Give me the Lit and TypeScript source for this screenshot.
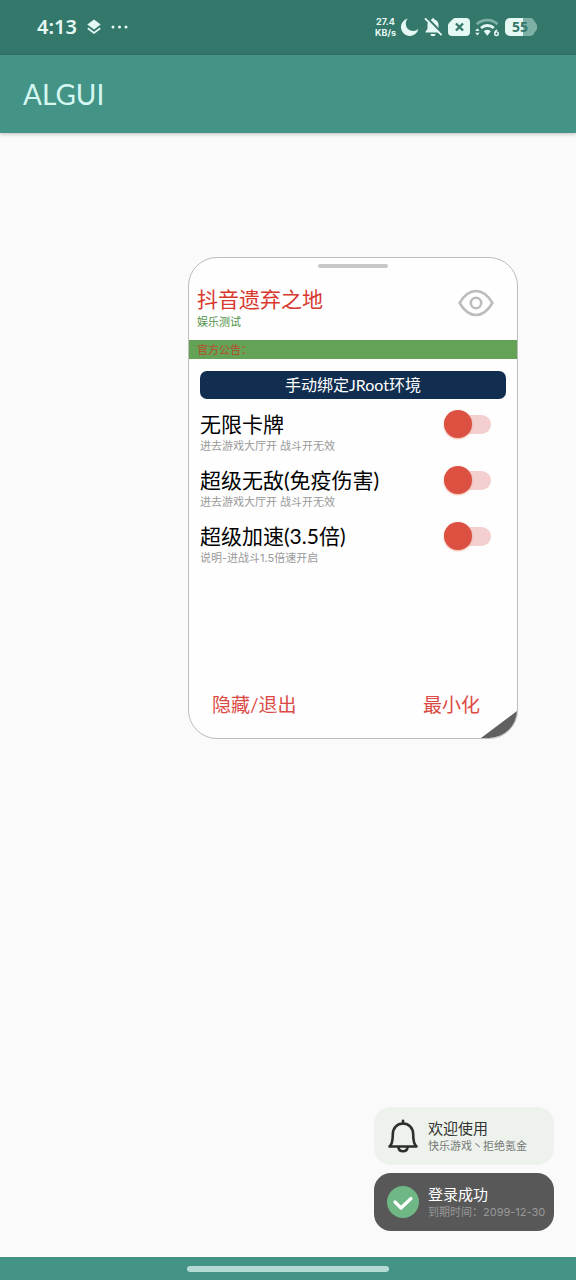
import { LitElement, html, css, svg } from "lit";
import { customElement, property } from "lit/decorators.js";

@customElement("status-bar")
class StatusBar extends LitElement {
  static styles = css`
    :host {
      display: flex;
      align-items: center;
      justify-content: space-between;
      height: 55px;
      box-sizing: border-box;
      padding: 0 38px 1px 37px;
      background: #34786b;
      color: #e6f8f4;
      font-family: "Noto Sans", sans-serif;
    }
    .side { display: flex; align-items: center; }
    .left { gap: 10px; }
    .right { gap: 5px; }
    .time { font-size: 20px; line-height: 24px; font-weight: 600; }
    .speed {
      display: flex;
      flex-direction: column;
      align-items: center;
      font: 700 9px/11px Inter, sans-serif;
    }
    svg { display: block; }
    .battery { font: 700 14px/18px "Open Sans", sans-serif; }
  `;

  render() {
    return html`
      <div class="side left">
        <span class="time">4:13</span>
        <svg width="14" height="16" viewBox="0 0 14 16" fill="currentColor" aria-hidden="true">
          <path d="M7 .5 13.700 5.500 7 10.500.3 5.500Z" />
          <path d="M.8 9.300 7 14 13.200 9.300" fill="none" stroke="currentColor" stroke-width="1.700" />
        </svg>
        <svg width="17" height="4" viewBox="0 0 17 4" fill="currentColor" aria-hidden="true">
          <circle cx="2" cy="2" r="1.500" /><circle cx="8.500" cy="2" r="1.500" /><circle cx="15" cy="2" r="1.500" />
        </svg>
      </div>
      <div class="side right">
        <div class="speed"><span>27.4</span><span>KB/s</span></div>
        <svg width="18" height="18" viewBox="0 0 18 18" fill="currentColor" aria-hidden="true">
          <path d="M6.800.6A7.200 7.200 0 0 0 17.400 10.800 8.800 8.800 0 1 1 6.800.6Z" />
        </svg>
        <svg width="19" height="20" viewBox="0 0 19 20" aria-hidden="true">
          <path d="M9 1.200c.9 0 1.400.6 1.400 1.400 2.700.7 4.100 2.800 4.100 5.400v4l1.900 2.600v.8H1.600v-.8L3.500 12V8c0-2.600 1.400-4.700 4.100-5.400 0-.8.5-1.400 1.400-1.400Z" fill="currentColor" />
          <path d="M6.400 17h5.200a2.600 2.200 0 0 1-5.200 0Z" fill="currentColor" />
          <path d="M2.600.4 19 17" stroke="#34786b" stroke-width="2.200" />
          <path d="M1 1.400 17.600 18.200" stroke="currentColor" stroke-width="1.900" />
        </svg>
        <svg width="22" height="18" viewBox="0 0 22 18" aria-hidden="true">
          <path d="M7.500 0H18a4 4 0 0 1 4 4v10a4 4 0 0 1-4 4H4a4 4 0 0 1-4-4V7.500C0 6.400.4 5.500 1.200 4.700L4.700 1.200C5.500.4 6.400 0 7.500 0Z" fill="currentColor" />
          <path d="m8 5.500 7 7m0-7-7 7" stroke="#34786b" stroke-width="2.400" />
        </svg>
        <svg width="25" height="19" viewBox="0 0 25 19" fill="none" aria-hidden="true">
          <path d="M1.800 6.200a15.500 15.500 0 0 1 20.800 0" stroke="#7fb0a6" stroke-width="2.800" />
          <path d="M6 10a9.500 9.500 0 0 1 12.800 0" stroke="currentColor" stroke-width="2.800" />
          <path d="M8.800 13.300a5.500 5.500 0 0 1 7 0l-3.500 4.400Z" fill="currentColor" />
          <path d="M.2 13 2.400 10.200 4.600 13ZM.2 14.800h4.400L2.400 17.600Z" fill="currentColor" />
          <path d="M22 11.800c-1.600 1-2.300 2.200-2.300 3.600" stroke="currentColor" stroke-width="1.400" />
          <circle cx="21.500" cy="15.700" r="1.800" stroke="currentColor" stroke-width="1.400" />
        </svg>
        <svg class="battery" width="33" height="18" viewBox="0 0 33 18" role="img" aria-label="55%">
          <path d="M18 0h7c2.500 0 4 1.300 4.500 3.800 1.800 1.200 2.700 3 2.700 5.200s-.9 4-2.700 5.200C29 16.700 27.500 18 25 18h-7Z" fill="#7fb0a6" />
          <path d="M5 0h13v18H5a5 5 0 0 1-5-5V5a5 5 0 0 1 5-5Z" fill="currentColor" />
          <text x="15" y="14" text-anchor="middle" fill="#34786b">55</text>
        </svg>
      </div>
    `;
  }
}

@customElement("switch-row")
class SwitchRow extends LitElement {
  @property() label = "";
  @property() note = "";

  static styles = css`
    :host {
      display: flex;
      justify-content: space-between;
      align-items: flex-start;
      height: 56px;
    }
    .text { display: flex; flex-direction: column; }
    .label { font-size: 21px; line-height: 28px; color: #000; }
    .note { font: 11px/17px Inter, "Noto Sans CJK SC", sans-serif; color: #999; }
    .switch {
      appearance: none;
      display: grid;
      align-items: center;
      width: 47px;
      height: 28px;
      margin: 0;
    }
    .switch::before,
    .switch::after { content: ""; grid-area: 1 / 1; }
    .switch::before {
      justify-self: end;
      width: 39px;
      height: 19px;
      border-radius: 10px;
      background: #f4cfcf;
    }
    .switch::after {
      width: 28px;
      height: 28px;
      border-radius: 50%;
      background: #dc5041;
      box-shadow: 0 1px 2px rgba(220, 80, 40, 0.45);
    }
    .switch:checked::after { justify-self: end; }
  `;

  render() {
    return html`
      <label class="text" for="toggle">
        <span class="label">${this.label}</span>
        <span class="note">${this.note}</span>
      </label>
      <input class="switch" id="toggle" type="checkbox" role="switch" />
    `;
  }
}

@customElement("toast-card")
class ToastCard extends LitElement {
  @property() kind = "info";
  @property() heading = "";
  @property() detail = "";

  static styles = css`
    .card {
      display: flex;
      align-items: center;
      gap: 8px;
      width: 180px;
      height: 58px;
      box-sizing: border-box;
      padding-left: 12px;
      border-radius: 17px;
      background: #edf3ec;
      color: #333;
      white-space: nowrap;
    }
    .success { background: #585858; color: #fff; }
    .heading { font-size: 15px; line-height: 20px; }
    .detail { font: 11px/17px Inter, "Noto Sans CJK SC", sans-serif; color: #777; }
    .success .detail { color: #999; }
    svg { display: block; }
  `;

  private bell = svg`
    <path d="M3.500 27.500C6.500 25 6.800 21 6.800 15.500 6.800 9 11 4.500 17 4.500s10.200 4.500 10.200 11c0 5.500.3 9.500 3.300 12Z" />
    <path d="M17 4.500V1.800" />
    <path d="M12.500 28.500c.7 5 8.300 5 9 0" />
  `;

  render() {
    return html`
      <div class="card ${this.kind}">
        ${this.kind === "success"
          ? html`<svg width="34" height="34" viewBox="0 0 34 34" fill="none" aria-hidden="true">
              <circle cx="17" cy="17" r="16" fill="#6fb785" />
              <path d="m9 17 6 6L25 13.500" stroke="#fff" stroke-width="3.200" stroke-linecap="round" stroke-linejoin="round" />
            </svg>`
          : html`<svg width="34" height="34" viewBox="0 0 34 34" fill="none" stroke="#2c2f2c" stroke-width="2.600" stroke-linecap="round" stroke-linejoin="round" aria-hidden="true">${this.bell}</svg>`}
        <div>
          <div class="heading">${this.heading}</div>
          <div class="detail">${this.detail}</div>
        </div>
      </div>
    `;
  }
}

@customElement("float-panel")
class FloatPanel extends LitElement {
  static styles = css`
    :host {
      display: flex;
      flex-direction: column;
      box-sizing: border-box;
      border: 1px solid #bdbdbd;
      border-radius: 29px;
      background: #fefefe;
      overflow: hidden;
    }
    .handle {
      align-self: center;
      width: 70px;
      height: 4px;
      margin-top: 6px;
      border-radius: 2px;
      background: #c8c8c8;
    }
    .head {
      display: flex;
      justify-content: space-between;
      align-items: flex-start;
      padding: 16px 23px 0 8px;
      height: 56px;
    }
    .title { margin: 0; font-size: 21px; font-weight: 400; line-height: 30px; color: #d8392f; }
    .subtitle { margin: 0; font-size: 11px; line-height: 16px; color: #4f9245; }
    .eye { margin: 5px 0 0; padding: 0; border: 0; background: none; }
    .eye svg { display: block; }
    .notice {
      padding-left: 8px;
      font-size: 11px;
      line-height: 19px;
      color: #b84a2c;
      background: #64a256;
    }
    .body { flex: 1; padding: 12px 11px 0; }
    .bind {
      display: block;
      width: 100%;
      height: 28px;
      padding: 0;
      border: 0;
      border-radius: 7px;
      background: #112e50;
      color: #fff;
      font: inherit;
      font-size: 16px;
      line-height: 28px;
    }
    .rows { padding: 11px 15px 0 0; }
    .foot {
      display: flex;
      justify-content: space-between;
      padding: 0 37px 19px 23px;
    }
    .action {
      padding: 0;
      border: 0;
      background: none;
      color: #dc4a45;
      font: inherit;
      font-size: 19px;
      line-height: 28px;
    }
    .grip { position: absolute; right: 0; bottom: 0; }
  `;

  render() {
    return html`
      <div class="handle"></div>
      <div class="head">
        <div>
          <h2 class="title">抖音遗弃之地</h2>
          <p class="subtitle">娱乐测试</p>
        </div>
        <button class="eye" aria-label="显示">
          <svg width="36" height="28" viewBox="0 0 36 28" fill="none" stroke="#bcbcbc" stroke-width="2.600" stroke-linejoin="round">
            <path d="M1.600 14C6 6.500 11.500 2 18 2s12 4.500 16.400 12C30 21.500 24.500 26 18 26S6 21.500 1.600 14Z" />
            <circle cx="18" cy="14" r="5.200" />
          </svg>
        </button>
      </div>
      <div class="notice">官方公告：</div>
      <div class="body">
        <button class="bind">手动绑定JRoot环境</button>
        <div class="rows">
          <switch-row label="无限卡牌" note="进去游戏大厅开 战斗开无效"></switch-row>
          <switch-row label="超级无敌(免疫伤害)" note="进去游戏大厅开 战斗开无效"></switch-row>
          <switch-row label="超级加速(3.5倍)" note="说明-进战斗1.5倍速开启"></switch-row>
        </div>
      </div>
      <div class="foot">
        <button class="action">隐藏/退出</button>
        <button class="action">最小化</button>
      </div>
      <svg class="grip" width="36" height="27" viewBox="0 0 36 27" aria-hidden="true">
        <path d="M36 0v27H0Z" fill="#606060" />
      </svg>
    `;
  }
}

@customElement("app-root")
class AppRoot extends LitElement {
  static styles = css`
    :host {
      display: flex;
      flex-direction: column;
      position: relative;
      min-height: 100vh;
      background: #fafafa;
      font-family: Lato, "Noto Sans CJK SC", sans-serif;
    }
    .appbar {
      display: flex;
      align-items: center;
      height: 78px;
      padding: 0 23px;
      background: #439487;
      box-shadow: 0 1px 4px rgba(0, 0, 0, 0.25);
    }
    .name { margin: 0; font-size: 28px; font-weight: 400; line-height: 38px; color: #d5f7f1; }
    .content { flex: 1; }
    .panel { position: absolute; left: 188px; top: 257px; width: 330px; height: 482px; }
    .toasts {
      position: absolute;
      right: 22px;
      bottom: 49px;
      display: flex;
      flex-direction: column;
      gap: 8px;
    }
    .nav {
      display: flex;
      justify-content: center;
      align-items: center;
      height: 23px;
      background: #439487;
    }
    .pill { width: 202px; height: 6px; border-radius: 3px; background: #b5dbd4; }
  `;

  render() {
    return html`
      <status-bar></status-bar>
      <header class="appbar"><h1 class="name">ALGUI</h1></header>
      <main class="content">
        <float-panel class="panel"></float-panel>
        <div class="toasts">
          <toast-card kind="info" heading="欢迎使用" detail="快乐游戏丶拒绝氪金"></toast-card>
          <toast-card kind="success" heading="登录成功" detail="到期时间：2099-12-30"></toast-card>
        </div>
      </main>
      <footer class="nav"><div class="pill"></div></footer>
    `;
  }
}
